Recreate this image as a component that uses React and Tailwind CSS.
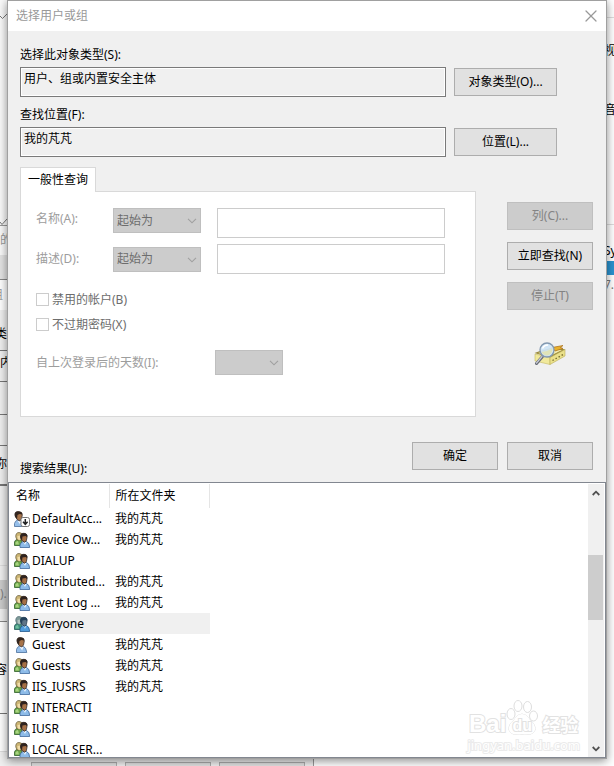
import { X } from "lucide-react";
import clsx from "clsx";

const LOCAL = "我的芃芃";

const accounts = [
  { name: "DefaultAcc...", folder: LOCAL, icon: "disabled" },
  { name: "Device Ow...", folder: LOCAL },
  { name: "DIALUP" },
  { name: "Distributed...", folder: LOCAL },
  { name: "Event Log ...", folder: LOCAL },
  { name: "Everyone", selected: true },
  { name: "Guest", folder: LOCAL, icon: "user" },
  { name: "Guests", folder: LOCAL },
  { name: "IIS_IUSRS", folder: LOCAL },
  { name: "INTERACTI" },
  { name: "IUSR" },
  { name: "LOCAL SER..." },
];

const GroupIcon = ({ selected }) => (
  <svg viewBox="0 0 16 16" className="h-4 w-4 shrink-0" aria-hidden="true">
    <path d="M.5 13.500V10Q1 8 3 7.500H7L9 13.500Z" fill={selected ? "#3f8f7a" : "#6ba548"} stroke={selected ? "#235a5a" : "#2f5f2a"} strokeWidth=".8" />
    <path d="M1.500 12.500V10.500Q2 9 4 9L5 12.500Z" fill={selected ? "#6fbfa0" : "#a8d480"} />
    <path d="M1.800 5Q1.500 .6 5 .5T8 4V8H3Z" fill={selected ? "#7f9a98" : "#cdb675"} stroke={selected ? "#4c6a72" : "#5f5230"} strokeWidth=".7" />
    <path d="M3.500 4L6.500 3.500V7L5.200 8.500 3.800 7Z" fill={selected ? "#b2c4c0" : "#f0dca8"} />
    <path d="M6 15.500V13Q6.500 10.500 9 9.500H12.500Q15.500 10.500 15.700 15.500Z" fill={selected ? "#4f9cdc" : "#8dbbe8"} stroke={selected ? "#24588c" : "#3f689c"} strokeWidth=".8" />
    <path d="M9.300 10L11 13 12.500 10Z" fill={selected ? "#a9d2f2" : "#e8f3ff"} />
    <path d="M6.500 5.500Q6 1.300 9.800 1.300T13 5.500L12.300 8.800 10.800 10.300 8.500 9Z" fill={selected ? "#5d7488" : "#a56f45"} stroke={selected ? "#1c3448" : "#241c1a"} strokeWidth=".7" />
    <path d="M6.500 6.500Q5.500 1.200 9.800 1.200T13.200 5L11.500 4 8.500 4.500 8 8Z" fill={selected ? "#23425c" : "#2e221e"} />
  </svg>
);

const UserIcon = ({ disabled }) => (
  <svg viewBox="0 0 16 16" className="h-4 w-4 shrink-0" aria-hidden="true">
    <g transform={disabled ? "translate(-2 0)" : undefined}>
      <path d="M2.500 15.500V12.500Q3 10 5.500 9H9Q12.300 10.500 12.800 15.500Z" fill="#96bfea" stroke="#4a6f9c" strokeWidth=".8" />
      <path d="M5.300 9.500L8.200 13.500 9.500 9.500Z" fill="#eef6ff" />
      <path d="M3 4Q2.500 .5 6.300 .5T10.300 4L9.500 8 7.800 10 5 8.500Z" fill="#a8744a" stroke="#2a2424" strokeWidth=".7" />
      <path d="M3 6Q1.800 .4 6.300 .4T10.400 3.500L7.500 3 5.500 4 5 8Z" fill="#33261f" />
    </g>
    {disabled && (
      <>
        <rect x="7" y="6.500" width="8.500" height="9" rx="2" fill="#fff" stroke="#777" />
        <path d="M11.300 8V12.500M9 10.800L11.300 13.300 13.600 10.800" fill="none" stroke="#222" strokeWidth="1.500" />
      </>
    )}
  </svg>
);

const SearchBookIcon = () => (
  <svg viewBox="0 0 32 24" className="h-6 w-8" role="img" aria-label="搜索">
    <path d="M.5 11L6 9 20 5 31.500 7.500 17 16Z" fill="#9a8a3c" />
    <path d="M4 11L19 6.500 28 8 16 14Z" fill="#f5edb0" />
    <path d="M18 5.500L29 3.500 26.500 5.500 29 6.500 21 9Z" fill="#e9b12c" stroke="#a86c14" strokeWidth=".7" />
    <path d="M1 12L16 15.500V22.500L1 19Z" fill="#f1e99c" stroke="#c4b860" strokeWidth=".6" />
    <path d="M16 15.500L31 7.500V14L16 22.500Z" fill="#eae08a" stroke="#b8ac58" strokeWidth=".6" />
    <path d="M18.500 18.500L29 12.500" stroke="#766b2a" strokeWidth="1.400" strokeDasharray="1.500 2" />
    <path d="M8.500 14.500L2.500 21.500" stroke="#666a74" strokeWidth="3" strokeLinecap="round" />
    <path d="M8 14.500L2.500 21" stroke="#c7cbd6" strokeWidth="1.200" strokeLinecap="round" />
    <circle cx="13" cy="8" r="7" fill="#cfe5f6" fillOpacity=".92" stroke="#8298b0" strokeWidth="1.300" />
    <path d="M7.500 10Q13 9.500 18.500 6.500 18.500 12.500 13 13.500 9 13 7.500 10Z" fill="#dfe3b8" />
    <path d="M8.500 6.500Q10 3 14 3" fill="none" stroke="#fff" strokeWidth="1.600" />
  </svg>
);

const Button = ({ className, disabled, children }) => (
  <button
    type="button"
    disabled={disabled}
    className={clsx(
      "h-7 border text-center",
      disabled ? "border-[#bfbfbf] bg-[#cccccc] text-[#838383]" : "border-[#adadad] bg-[#e1e1e1] text-black",
      className
    )}
  >
    {children}
  </button>
);

const Chevron = () => (
  <svg viewBox="0 0 10 6" className="pointer-events-none absolute right-1 top-[10px] h-[6px] w-[10px]" aria-hidden="true">
    <path d="M1 .8L5 4.800 9 .8" fill="none" stroke="#a0a0a0" strokeWidth="1.100" />
  </svg>
);

const DisabledSelect = ({ id, value, className }) => (
  <div className={clsx("relative", className)}>
    <select
      id={id}
      disabled
      className="block h-[25px] w-full appearance-none border border-[#bfbfbf] bg-[#cccccc] pl-[3px] text-[#6d6d6d] opacity-100"
    >
      <option>{value}</option>
    </select>
    <Chevron />
  </div>
);

const ReadonlyField = ({ id, label, value, button }) => (
  <div>
    <label htmlFor={id} className="block h-6 leading-6">{label}</label>
    <div className="flex items-center gap-2">
      <div className="h-[30px] min-w-0 flex-1 border border-[#7a7a7a]">
        <input id={id} readOnly value={value} className="block h-7 w-full border border-white bg-[#f0f0f0] pb-2 pl-[2px] outline-none" />
      </div>
      <Button className="w-[103px]">{button}</Button>
    </div>
  </div>
);

const QueryRow = ({ id, label, first }) => (
  <div className={clsx("flex", first ? "items-start" : "items-center")}>
    <label htmlFor={id} className="w-[77px] leading-[22px] text-[#9d9d9d]">{label}</label>
    <DisabledSelect id={id} value="起始为" className="w-[88px]" />
    <input aria-label={label} disabled className="ml-4 h-[30px] min-w-0 flex-1 border border-[#cccccc] bg-white" />
  </div>
);

const CheckRow = ({ label }) => (
  <label className="flex h-[25px] items-center gap-[3px] text-[#6d6d6d]">
    <input type="checkbox" disabled className="h-[13px] w-[13px] appearance-none border border-[#cccccc] bg-white" />
    {label}
  </label>
);

const QueryPanel = () => (
  <div className="min-w-0 flex-1">
    <div role="tablist" className="flex">
      <button
        type="button"
        role="tab"
        aria-selected="true"
        className="relative -mb-px h-[25px] w-[76px] border border-b-0 border-[#d9d9d9] bg-white"
      >
        一般性查询
      </button>
    </div>
    <div role="tabpanel" className="border border-[#d9d9d9] bg-white pb-[41px] pl-[15px] pr-[30px] pt-4">
      <div className="flex flex-col gap-[6px]">
        <QueryRow id="name" label="名称(A):" first />
        <QueryRow id="desc" label="描述(D):" />
      </div>
      <div className="my-[13px]">
        <CheckRow label="禁用的帐户(B)" />
        <CheckRow label="不过期密码(X)" />
      </div>
      <div className="flex items-center">
        <label htmlFor="days" className="w-[179px] text-[#9d9d9d]">自上次登录后的天数(I):</label>
        <DisabledSelect id="days" value="" className="w-[68px]" />
      </div>
    </div>
  </div>
);

const ScrollBar = () => (
  <div className="mt-px flex w-4 shrink-0 flex-col bg-[#f0f0f0]">
    <button type="button" aria-label="向上滚动" className="flex h-[17px] items-center justify-center">
      <svg viewBox="0 0 8 6" className="h-[6px] w-2"><path d="M.7 5L4 1.700 7.300 5" fill="none" stroke="#505050" strokeWidth="1.800" /></svg>
    </button>
    <div className="flex-[54]" />
    <div className="mr-px flex-[65] bg-[#cdcdcd]" />
    <div className="flex-[120]" />
    <button type="button" aria-label="向下滚动" className="flex h-[17px] items-center justify-center">
      <svg viewBox="0 0 8 6" className="h-[6px] w-2"><path d="M.7 1L4 4.300 7.300 1" fill="none" stroke="#505050" strokeWidth="1.800" /></svg>
    </button>
  </div>
);

const Watermark = () => (
  <div className="pointer-events-none absolute bottom-[3px] right-[25px] flex flex-col items-center text-white [paint-order:stroke_fill]">
    <div className="flex items-end font-bold [-webkit-text-stroke:2px_#e2e2e2]">
      <span className="font-['Liberation_Sans'] text-[24px] leading-[24px]">Bai</span>
      <span className="relative flex h-9 w-8 items-end justify-center">
        <svg viewBox="0 0 32 36" className="absolute inset-0 h-9 w-8" fill="none" stroke="#dedede">
          <ellipse cx="12" cy="6" rx="4" ry="5.500" />
          <ellipse cx="21.500" cy="7" rx="4" ry="5.500" />
          <ellipse cx="5" cy="14" rx="4" ry="5.500" />
          <ellipse cx="27.500" cy="16" rx="4" ry="5" />
          <path d="M16 14Q21 14 24 20 30 25 29 30 27 36 16 34 5 36 3 30 2 25 8 20 11 14 16 14Z" fill="#fff" />
        </svg>
        <span className="relative font-['Liberation_Sans'] text-[16px] leading-[20px]">du</span>
      </span>
      <span className="pl-1 text-[18px] leading-[22px]">经验</span>
    </div>
    <span className="font-['Noto_Sans'] text-[13px] leading-[18px] [-webkit-text-stroke:2px_#ebebeb]">jingyan.baidu.com</span>
  </div>
);

const Results = () => (
  <div className="relative flex h-[276px] border border-[#828790] bg-white pr-px">
    <div className="min-w-0 flex-1 overflow-hidden pt-px">
      <table className="w-[201px] table-fixed border-collapse">
        <thead>
          <tr className="h-6 text-left">
            <th className="w-[100px] border-r border-[#e5e5e5] p-0 pl-[7px] font-normal">名称</th>
            <th className="border-r border-[#e5e5e5] p-0 pl-[6px] font-normal">所在文件夹</th>
          </tr>
        </thead>
        <tbody>
          {accounts.map(({ name, folder, icon, selected }) => (
            <tr key={name} className="h-[21px]">
              <td className="p-0 pl-[5px]">
                <div className="flex h-[21px] items-center">
                  {icon ? <UserIcon disabled={icon === "disabled"} /> : <GroupIcon selected={selected} />}
                  <span className={clsx("flex-1 whitespace-nowrap pl-[2px] font-['Noto_Sans'] leading-[21px]", selected && "bg-[#f0f0f0]")}>
                    {name}
                  </span>
                </div>
              </td>
              <td className={clsx("p-0 pl-[6px]", selected && "bg-[#f0f0f0]")}>{folder}</td>
            </tr>
          ))}
        </tbody>
      </table>
    </div>
    <ScrollBar />
    <Watermark />
  </div>
);

const Dialog = () => (
  <main
    role="dialog"
    aria-labelledby="title"
    className="relative z-10 flex min-w-0 flex-1 flex-col border border-[#a0a0a0] bg-[#f0f0f0] shadow-[0_2px_9px_rgba(0,0,0,0.45)]"
  >
    <header className="flex h-[30px] items-center justify-between bg-white pl-2 pr-[5px] text-[#999999]">
      <h1 id="title">选择用户或组</h1>
      <button type="button" aria-label="关闭"><X size={20} strokeWidth={1.500} /></button>
    </header>

    <div className="flex flex-col gap-[6px] pl-3 pr-[49px] pt-3">
      <ReadonlyField id="type" label="选择此对象类型(S):" value="用户、组或内置安全主体" button="对象类型(O)..." />
      <ReadonlyField id="place" label="查找位置(F):" value={LOCAL} button="位置(L)..." />
    </div>

    <div className="mt-[10px] flex gap-[31px] pl-3 pr-[13px]">
      <QueryPanel />
      <div className="flex w-[86px] flex-col gap-3 pt-[35px]">
        <Button disabled>列(C)...</Button>
        <Button>立即查找(N)</Button>
        <Button disabled>停止(T)</Button>
        <div className="mt-5 flex justify-center"><SearchBookIcon /></div>
      </div>
    </div>

    <div className="flex items-start gap-[9px] pl-3 pr-[13px] pt-[25px]">
      <h2 className="flex-1 pt-[18px] leading-[18px]">搜索结果(U):</h2>
      <Button className="w-[86px]">确定</Button>
      <Button className="w-[86px]">取消</Button>
    </div>
    <div className="mt-1">
      <Results />
    </div>
  </main>
);

// Slivers of the windows that stand behind the dialog
const LeftEdge = () => (
  <div className="flex w-[7px] shrink-0 flex-col whitespace-nowrap bg-[#f0f0f0]" aria-hidden="true">
    <div className="flex h-[225px] flex-col justify-between bg-[#fafafa] pt-[14px]">
      <svg viewBox="0 0 7 6" className="h-[6px] w-[7px]"><path d="M0 2L2.500 4.500 7 0" fill="none" stroke="#777" /></svg>
      <svg viewBox="0 0 7 6" className="h-[6px] w-[7px]"><path d="M0 3L2 5.500 7 0" fill="none" stroke="#777" /></svg>
    </div>
    <div className="h-[30px] border-t border-[#999] bg-[#fafafa] pt-1 leading-5 text-[#999]">的</div>
    <div className="h-[25px] border-b border-[#888] bg-[#e4e4e4]" />
    <div className="flex h-[30px] justify-end bg-white pr-1 leading-[30px] text-[#999]">组</div>
    <div className="flex h-[41px] justify-end border-b border-[#777] pt-[14px] leading-5">类</div>
    <div className="h-[31px] border-b border-[#777] leading-6">内</div>
    <div className="h-[33px] border-b border-[#777]" />
    <div className="h-[31px] border-b border-[#777]" />
    <div className="flex h-10 justify-end border-b-2 border-[#777] leading-9">你</div>
    <div className="h-20 border-b border-[#ddd]" />
    <div className="h-[14px]" />
    <div className="h-[29px] bg-[#cccccc] leading-7 text-[#838383]">)...</div>
    <div className="h-[13px] border-b border-[#888]" />
    <div className="flex h-[92px] justify-end border-b border-[#777] bg-white pt-[38px] leading-5">容</div>
    <div className="h-[38px] border-b border-[#ddd] bg-white" />
  </div>
);

const RightEdge = () => (
  <div className="-ml-[3px] flex w-[10px] shrink-0 flex-col overflow-hidden whitespace-nowrap bg-white" aria-hidden="true">
    <div className="h-[18px] border-b border-[#ddd]" />
    <div className="h-[60px] pt-[23px] leading-5">视</div>
    <div className="h-[147px] border-b border-[#ddd] pt-[22px] leading-5">音</div>
    <div className="h-9 pt-4 leading-5">Sy</div>
    <div className="h-[14px] bg-[#2a93d0]" />
    <div className="leading-5 text-[#777]">7.</div>
  </div>
);

export default function App() {
  return (
    <div className="flex min-h-screen flex-col bg-white font-['Noto_Sans','Noto_Sans_CJK_SC',sans-serif] text-[12px] leading-[18px] text-black">
      <div className="flex">
        <LeftEdge />
        <Dialog />
        <RightEdge />
      </div>
      <div className="flex flex-1 overflow-hidden" aria-hidden="true">
        <div className="flex h-2 w-[314px] gap-2 border-r border-[#999] bg-[#f0f0f0] pl-[31px] pr-2 pt-[3px]">
          <div className="h-7 flex-1 border border-[#adadad] bg-[#e1e1e1]" />
          <div className="h-7 flex-1 border border-[#adadad] bg-[#e1e1e1]" />
          <div className="h-7 flex-1 border border-[#adadad] bg-[#e1e1e1]" />
        </div>
      </div>
    </div>
  );
}
